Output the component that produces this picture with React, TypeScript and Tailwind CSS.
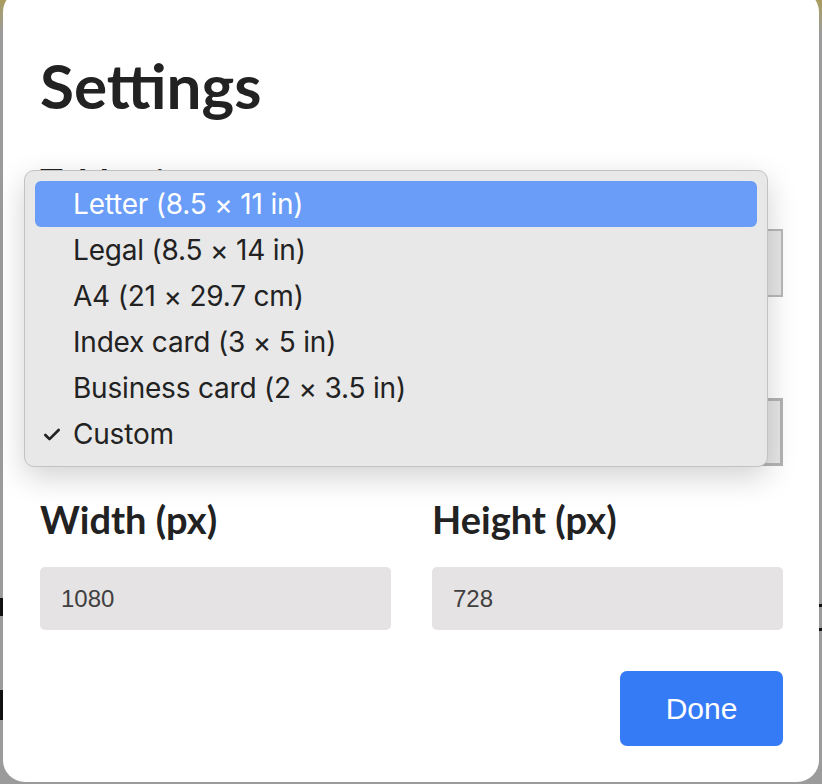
import { Check, ChevronDown } from 'lucide-react';

const SIZES = [
    'Letter (8.5 × 11 in)',
    'Legal (8.5 × 14 in)',
    'A4 (21 × 29.7 cm)',
    'Index card (3 × 5 in)',
    'Business card (2 × 3.5 in)',
    'Custom',
];

const lato = "font-['Lato','Noto_Sans',sans-serif]";

function Select({ value, thick }: { value: string; thick?: boolean }) {
    return (
        <div
            className={`flex items-center justify-between h-[68px] bg-[#e6e6e6] px-5 text-[24px] text-[#222] font-['Liberation_Sans',Arial,sans-serif] ${
                thick ? 'border-[3px] border-[#b3b3b3]' : 'border-2 border-[#b8b8b8]'
            }`}
        >
            <span>{value}</span>
            <ChevronDown size={16} strokeWidth={2.5} className="text-[#111]" />
        </div>
    );
}

function Field({ label, value }: { label: string; value: string }) {
    return (
        <div className="flex flex-col">
            <label className={`${lato} font-bold text-[38px] leading-none text-[#222]`}>{label}</label>
            <div className="mt-[29px] h-[63px] rounded-[5px] bg-[#e5e3e3] flex items-center px-[21px] text-[24px] text-[#404040] font-['Liberation_Sans',Arial,sans-serif]">
                {value}
            </div>
        </div>
    );
}

export default function App() {
    return (
        <div className="relative w-[822px] h-[784px] overflow-hidden bg-[#9b9b9b]">
            {/* page behind the dialog */}
            <div className="absolute inset-x-0 top-0 h-[34px] bg-gradient-to-b from-[#a99c5c] to-[#9b9b9b]" />
            <div className="absolute left-0 top-[598px] w-[3px] h-[18px] bg-[#111]" />
            <div className="absolute left-0 top-[690px] w-[3px] h-[30px] bg-[#111]" />
            <div className="absolute right-0 top-[604px] w-[3px] h-[3px] bg-[#111]" />
            <div className="absolute right-0 top-[628px] w-[3px] h-[3px] bg-[#111]" />

            {/* dialog */}
            <div className="relative mx-[3px] mt-[-10px] h-[792px] rounded-[22px] bg-white pl-[37px] pr-[36px] pt-[64px]">
                <h1 className={`${lato} font-bold text-[62px] leading-none text-[#222]`}>Settings</h1>

                <label className={`block mt-[47px] ${lato} font-bold text-[38px] leading-none text-[#222]`}>Table size</label>
                <div className="mt-[28px]">
                    <Select value="Letter (8.5 × 11 in)" />
                </div>

                <label className={`block mt-[32px] ${lato} font-bold text-[38px] leading-none text-[#222]`}>Page size</label>
                <div className="mt-[31px]">
                    <Select value="Custom" thick />
                </div>

                <div className="mt-[34px] grid grid-cols-2 gap-x-[41px]">
                    <Field label="Width (px)" value="1080" />
                    <Field label="Height (px)" value="728" />
                </div>

                <div className="mt-[41px] flex justify-end">
                    <button className="w-[163px] h-[75px] rounded-[7px] bg-[#367bf6] text-white text-[30px] font-['Liberation_Sans',Arial,sans-serif]">
                        Done
                    </button>
                </div>
            </div>

            {/* open dropdown menu */}
            <div className="absolute left-[24px] top-[170px] w-[744px] rounded-[10px] border border-[#c2c2c2] bg-[#e8e8e8] px-[10px] pt-[10px] pb-[9px] shadow-[0_10px_30px_rgba(0,0,0,0.18)] font-['Inter','Noto_Sans',sans-serif]">
                {SIZES.map((s, i) => (
                    <div
                        key={s}
                        className={`relative flex items-center h-[46px] pl-[38px] rounded-[6px] text-[28px] tracking-[-0.2px] ${
                            i === 0 ? 'bg-[#699df7] text-white' : 'text-[#222]'
                        }`}
                    >
                        {s === 'Custom' && (
                            <Check size={20} strokeWidth={3.2} className="absolute left-[7px] top-[14px] text-[#222]" />
                        )}
                        {s}
                    </div>
                ))}
            </div>
        </div>
    );
}
